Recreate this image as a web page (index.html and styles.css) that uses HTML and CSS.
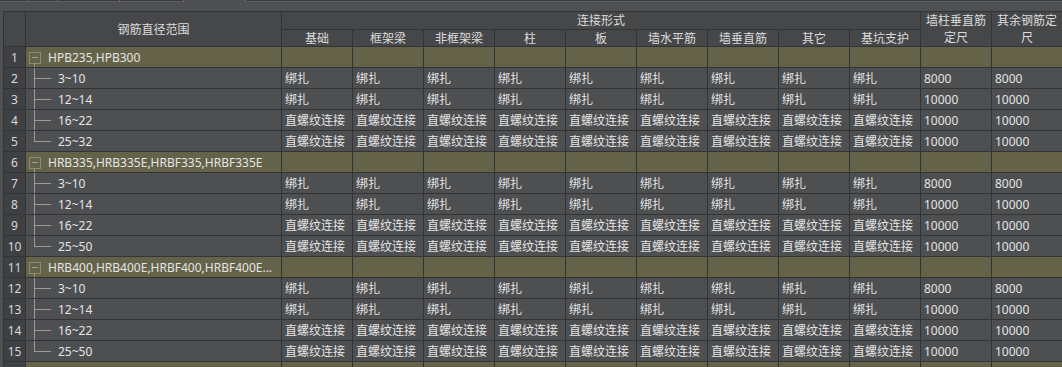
FILE: index.html
```html
<!DOCTYPE html>
<html lang="zh-CN">
<head>
<meta charset="utf-8">
<title>钢筋连接设置</title>
<link rel="stylesheet" href="styles.css">
</head>
<body>
<div class="tabs">
  <span class="tab t1"></span><span class="tab t2"></span><span class="tab t3"></span><span class="tab t4"></span><span class="tab-gap"></span><span class="tab t5"></span>
</div>
<table class="grid">
  <colgroup>
    <col class="c-no"><col class="c-name">
    <col class="c-val"><col class="c-val"><col class="c-val"><col class="c-val"><col class="c-val"><col class="c-val"><col class="c-val"><col class="c-val"><col class="c-val"><col class="c-val"><col class="c-val">
  </colgroup>
  <thead>
    <tr class="h1">
      <th rowspan="2" class="corner"></th>
      <th rowspan="2">钢筋直径范围</th>
      <th colspan="9">连接形式</th>
      <th rowspan="2" class="wrap">墙柱垂直筋定尺</th>
      <th rowspan="2" class="wrap">其余钢筋定尺</th>
    </tr>
    <tr class="h2">
      <th>基础</th><th>框架梁</th><th>非框架梁</th><th>柱</th><th>板</th><th>墙水平筋</th><th>墙垂直筋</th><th>其它</th><th>基坑支护</th>
    </tr>
  </thead>
  <tbody>
    <tr class="group"><td class="no">1</td><td class="name"><span class="toggle"></span><span class="gtext">HPB235,HPB300</span></td><td></td><td></td><td></td><td></td><td></td><td></td><td></td><td></td><td></td><td></td><td></td></tr>
    <tr><td class="no">2</td><td class="name child">3~10</td><td>绑扎</td><td>绑扎</td><td>绑扎</td><td>绑扎</td><td>绑扎</td><td>绑扎</td><td>绑扎</td><td>绑扎</td><td>绑扎</td><td>8000</td><td>8000</td></tr>
    <tr><td class="no">3</td><td class="name child">12~14</td><td>绑扎</td><td>绑扎</td><td>绑扎</td><td>绑扎</td><td>绑扎</td><td>绑扎</td><td>绑扎</td><td>绑扎</td><td>绑扎</td><td>10000</td><td>10000</td></tr>
    <tr><td class="no">4</td><td class="name child">16~22</td><td>直螺纹连接</td><td>直螺纹连接</td><td>直螺纹连接</td><td>直螺纹连接</td><td>直螺纹连接</td><td>直螺纹连接</td><td>直螺纹连接</td><td>直螺纹连接</td><td>直螺纹连接</td><td>10000</td><td>10000</td></tr>
    <tr><td class="no">5</td><td class="name child last">25~32</td><td>直螺纹连接</td><td>直螺纹连接</td><td>直螺纹连接</td><td>直螺纹连接</td><td>直螺纹连接</td><td>直螺纹连接</td><td>直螺纹连接</td><td>直螺纹连接</td><td>直螺纹连接</td><td>10000</td><td>10000</td></tr>

    <tr class="group"><td class="no">6</td><td class="name"><span class="toggle"></span><span class="gtext">HRB335,HRB335E,HRBF335,HRBF335E</span></td><td></td><td></td><td></td><td></td><td></td><td></td><td></td><td></td><td></td><td></td><td></td></tr>
    <tr><td class="no">7</td><td class="name child">3~10</td><td>绑扎</td><td>绑扎</td><td>绑扎</td><td>绑扎</td><td>绑扎</td><td>绑扎</td><td>绑扎</td><td>绑扎</td><td>绑扎</td><td>8000</td><td>8000</td></tr>
    <tr><td class="no">8</td><td class="name child">12~14</td><td>绑扎</td><td>绑扎</td><td>绑扎</td><td>绑扎</td><td>绑扎</td><td>绑扎</td><td>绑扎</td><td>绑扎</td><td>绑扎</td><td>10000</td><td>10000</td></tr>
    <tr><td class="no">9</td><td class="name child">16~22</td><td>直螺纹连接</td><td>直螺纹连接</td><td>直螺纹连接</td><td>直螺纹连接</td><td>直螺纹连接</td><td>直螺纹连接</td><td>直螺纹连接</td><td>直螺纹连接</td><td>直螺纹连接</td><td>10000</td><td>10000</td></tr>
    <tr><td class="no">10</td><td class="name child last">25~50</td><td>直螺纹连接</td><td>直螺纹连接</td><td>直螺纹连接</td><td>直螺纹连接</td><td>直螺纹连接</td><td>直螺纹连接</td><td>直螺纹连接</td><td>直螺纹连接</td><td>直螺纹连接</td><td>10000</td><td>10000</td></tr>

    <tr class="group"><td class="no">11</td><td class="name"><span class="toggle"></span><span class="gtext">HRB400,HRB400E,HRBF400,HRBF400E...</span></td><td></td><td></td><td></td><td></td><td></td><td></td><td></td><td></td><td></td><td></td><td></td></tr>
    <tr><td class="no">12</td><td class="name child">3~10</td><td>绑扎</td><td>绑扎</td><td>绑扎</td><td>绑扎</td><td>绑扎</td><td>绑扎</td><td>绑扎</td><td>绑扎</td><td>绑扎</td><td>8000</td><td>8000</td></tr>
    <tr><td class="no">13</td><td class="name child">12~14</td><td>绑扎</td><td>绑扎</td><td>绑扎</td><td>绑扎</td><td>绑扎</td><td>绑扎</td><td>绑扎</td><td>绑扎</td><td>绑扎</td><td>10000</td><td>10000</td></tr>
    <tr><td class="no">14</td><td class="name child">16~22</td><td>直螺纹连接</td><td>直螺纹连接</td><td>直螺纹连接</td><td>直螺纹连接</td><td>直螺纹连接</td><td>直螺纹连接</td><td>直螺纹连接</td><td>直螺纹连接</td><td>直螺纹连接</td><td>10000</td><td>10000</td></tr>
    <tr><td class="no">15</td><td class="name child last">25~50</td><td>直螺纹连接</td><td>直螺纹连接</td><td>直螺纹连接</td><td>直螺纹连接</td><td>直螺纹连接</td><td>直螺纹连接</td><td>直螺纹连接</td><td>直螺纹连接</td><td>直螺纹连接</td><td>10000</td><td>10000</td></tr>

    <tr class="group"><td class="no">16</td><td class="name"><span class="toggle"></span><span class="gtext">HRB500,HRB500E,HRBF500,HRBF500E</span></td><td></td><td></td><td></td><td></td><td></td><td></td><td></td><td></td><td></td><td></td><td></td></tr>
  </tbody>
</table>
</body>
</html>
```

FILE: styles.css
```css
html, body {
  margin: 0;
  padding: 0;
  background: #4f5052;
  overflow: hidden;
  height: 367px;
}

body {
  font-family: "Noto Sans", "Noto Sans CJK SC", sans-serif;
  font-size: 12px;
  color: #e4e4e4;
}

.tabs {
  display: flex;
  height: 11px;
  align-items: flex-start;
}

.tab {
  height: 1px;
  background: #3a3b3c;
  border-bottom: 1px solid #5e5f60;
}

.t1 { width: 28px; border-right: 1px solid #6a6b6c; }
.t2 { width: 28px; border-right: 1px solid #6a6b6c; }
.t3 { width: 61px; border-right: 1px solid #6a6b6c; }
.t4 { width: 63px; border-right: 1px solid #6a6b6c; }
.tab-gap { width: 61px; }
.t5 { flex: 1; border-left: 1px solid #6a6b6c; }

.grid {
  margin-left: 3px;
  border-collapse: collapse;
  table-layout: fixed;
  width: 1060px;
}

.c-no { width: 22px; }
.c-name { width: 256px; }
.c-val { width: 71px; }

.grid th,
.grid td {
  border: 1px solid #333436;
  padding: 0 3px;
  white-space: nowrap;
  overflow: hidden;
  vertical-align: middle;
}

.grid thead th {
  background: #464749;
  font-weight: normal;
  color: #dcdcdc;
  text-align: center;
  line-height: 15px;
  padding: 0 2px;
}

.grid thead th.wrap {
  white-space: normal;
  word-break: break-all;
  line-height: 17px;
}

.h1 th { height: 17px; }
.h2 th { height: 16px; }

.grid tbody td {
  height: 20px;
  background: #4e4f51;
  line-height: 17px;
  padding: 0 3px;
}

.grid tbody td.no {
  background: #3e4043;
  text-align: center;
  padding: 0;
  color: #d8d8d8;
}

.grid tbody tr.group td {
  background: #64634a;
}

.grid tbody tr.group td.no {
  background: #3e4043;
}

.name {
  position: relative;
  text-overflow: ellipsis;
}

.grid tbody .group td.name {
  padding-left: 3px;
}

.toggle {
  display: inline-block;
  width: 10px;
  height: 10px;
  border: 1px solid #8a8a78;
  vertical-align: -2px;
  position: relative;
  margin-right: 7px;
}

.toggle::after {
  content: "";
  position: absolute;
  left: 2px;
  right: 2px;
  top: 4px;
  height: 1px;
  background: #a0a090;
}

.group .name::after {
  content: "";
  position: absolute;
  left: 8px;
  top: 16px;
  bottom: -1px;
  width: 1px;
  background: #9a9a9a;
}

.grid tbody td.child {
  padding-left: 32px;
}

.child::before {
  content: "";
  position: absolute;
  left: 8px;
  top: -1px;
  bottom: -1px;
  width: 1px;
  background: #9a9a9a;
}

.child.last::before {
  bottom: 10px;
}

.child::after {
  content: "";
  position: absolute;
  left: 8px;
  width: 17px;
  top: 10px;
  height: 1px;
  background: #9a9a9a;
}
```
